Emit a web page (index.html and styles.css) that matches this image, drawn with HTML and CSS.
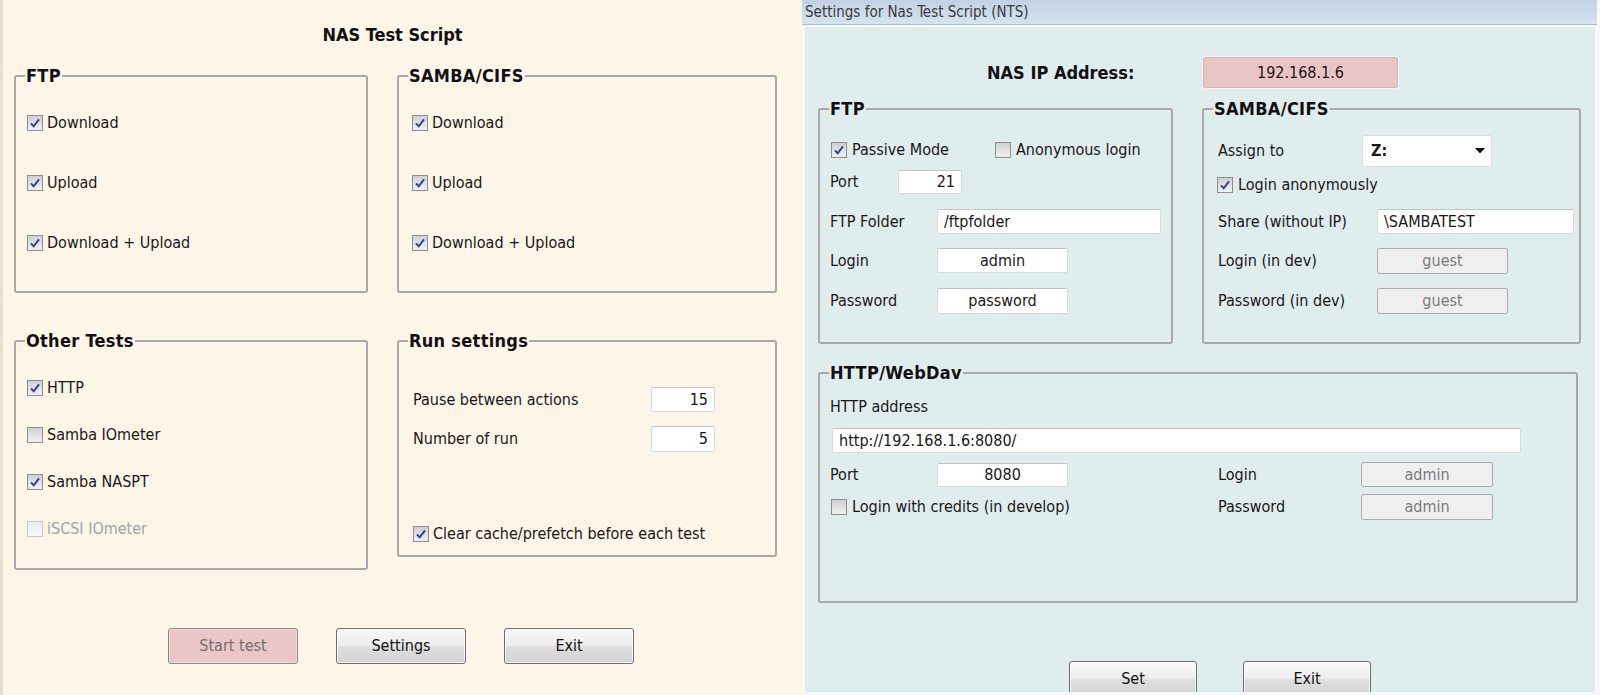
FILE: index.html
```html
<!DOCTYPE html>
<html lang="en">
<head>
<meta charset="utf-8">
<title>NAS Test Script</title>
<link rel="stylesheet" href="styles.css">
</head>
<body>
<div class="screen">
  <section class="main">
    <h1 class="title">NAS Test Script</h1>
    <div class="groups">
      <fieldset class="grp g-top">
        <legend>FTP</legend>
        <div class="list list-top pl11">
          <label class="chk"><span class="box"><svg class="tick" viewBox="0 0 14 14"><path d="M3 7.3 5.7 10.3 11 3.3"/></svg></span>Download</label>
          <label class="chk"><span class="box"><svg class="tick" viewBox="0 0 14 14"><path d="M3 7.3 5.7 10.3 11 3.3"/></svg></span>Upload</label>
          <label class="chk"><span class="box"><svg class="tick" viewBox="0 0 14 14"><path d="M3 7.3 5.7 10.3 11 3.3"/></svg></span>Download + Upload</label>
        </div>
      </fieldset>
      <fieldset class="grp g-top">
        <legend>SAMBA/CIFS</legend>
        <div class="list list-top pl13">
          <label class="chk"><span class="box"><svg class="tick" viewBox="0 0 14 14"><path d="M3 7.3 5.7 10.3 11 3.3"/></svg></span>Download</label>
          <label class="chk"><span class="box"><svg class="tick" viewBox="0 0 14 14"><path d="M3 7.3 5.7 10.3 11 3.3"/></svg></span>Upload</label>
          <label class="chk"><span class="box"><svg class="tick" viewBox="0 0 14 14"><path d="M3 7.3 5.7 10.3 11 3.3"/></svg></span>Download + Upload</label>
        </div>
      </fieldset>
      <fieldset class="grp g-other">
        <legend>Other Tests</legend>
        <div class="list list-other pl11">
          <label class="chk"><span class="box"><svg class="tick" viewBox="0 0 14 14"><path d="M3 7.3 5.7 10.3 11 3.3"/></svg></span>HTTP</label>
          <label class="chk"><span class="box"></span>Samba IOmeter</label>
          <label class="chk"><span class="box"><svg class="tick" viewBox="0 0 14 14"><path d="M3 7.3 5.7 10.3 11 3.3"/></svg></span>Samba NASPT</label>
          <label class="chk is-disabled"><span class="box"></span>iSCSI IOmeter</label>
        </div>
      </fieldset>
      <fieldset class="grp g-run">
        <legend>Run settings</legend>
        <div class="run">
          <div class="row"><span class="lbl lw-run">Pause between actions</span><span class="field f-num">15</span></div>
          <div class="row mt14"><span class="lbl lw-run">Number of run</span><span class="field f-num f-tall">5</span></div>
          <label class="chk mt70"><span class="box"><svg class="tick" viewBox="0 0 14 14"><path d="M3 7.3 5.7 10.3 11 3.3"/></svg></span>Clear cache/prefetch before each test</label>
        </div>
      </fieldset>
    </div>
    <div class="actions">
      <button class="btn btn-start" type="button">Start test</button>
      <button class="btn" type="button">Settings</button>
      <button class="btn" type="button">Exit</button>
    </div>
  </section>

  <section class="win">
    <div class="titlebar">Settings for Nas Test Script (NTS)</div>
    <div class="win-body">
      <div class="ip-row">
        <span class="ip-label">NAS IP Address:</span>
        <span class="ip-field">192.168.1.6</span>
      </div>
      <div class="sgroups">
        <fieldset class="grp s-ftp">
          <legend>FTP</legend>
          <div class="sbody ftp-body">
            <div class="row">
              <label class="chk c-passive"><span class="box"><svg class="tick" viewBox="0 0 14 14"><path d="M3 7.3 5.7 10.3 11 3.3"/></svg></span>Passive Mode</label>
              <label class="chk"><span class="box"></span>Anonymous login</label>
            </div>
            <div class="row mt8"><span class="lbl lw-port">Port</span><span class="field f-port">21</span></div>
            <div class="row mt15"><span class="lbl lw-ftp">FTP Folder</span><span class="field f-folder">/ftpfolder</span></div>
            <div class="row mt14"><span class="lbl lw-ftp">Login</span><span class="field f-mid">admin</span></div>
            <div class="row mt15"><span class="lbl lw-ftp">Password</span><span class="field f-mid f-tall">password</span></div>
          </div>
        </fieldset>
        <fieldset class="grp s-samba">
          <legend>SAMBA/CIFS</legend>
          <div class="sbody samba-body">
            <div class="row">
              <span class="lbl lw-assign">Assign to</span>
              <span class="select">Z:<svg class="caret" viewBox="0 0 10 6"><path d="M0 0H10L5 5.5Z"/></svg></span>
            </div>
            <div class="row mt6"><label class="chk c-anon"><span class="box"><svg class="tick" viewBox="0 0 14 14"><path d="M3 7.3 5.7 10.3 11 3.3"/></svg></span>Login anonymously</label></div>
            <div class="row mt12"><span class="lbl lw-share">Share (without IP)</span><span class="field f-share">\SAMBATEST</span></div>
            <div class="row mt14"><span class="lbl lw-share">Login (in dev)</span><span class="field is-off f-guest">guest</span></div>
            <div class="row mt14"><span class="lbl lw-share">Password (in dev)</span><span class="field is-off f-guest">guest</span></div>
          </div>
        </fieldset>
      </div>
      <fieldset class="grp s-http">
        <legend>HTTP/WebDav</legend>
        <div class="sbody http-body">
          <div class="row"><span class="lbl">HTTP address</span></div>
          <div class="row mt9"><span class="field f-url">http://192.168.1.6:8080/</span></div>
          <div class="cols mt9">
            <div class="row"><span class="lbl lw-ftp">Port</span><span class="field f-mid f-short">8080</span></div>
            <div class="row"><span class="lbl lw-http">Login</span><span class="field is-off f-cred">admin</span></div>
          </div>
          <div class="cols mt7">
            <div class="row"><label class="chk c-cred"><span class="box"></span>Login with credits (in develop)</label></div>
            <div class="row"><span class="lbl lw-http">Password</span><span class="field is-off f-cred f-tall">admin</span></div>
          </div>
        </div>
      </fieldset>
      <div class="win-actions">
        <button class="btn btn-win" type="button">Set</button>
        <button class="btn btn-win" type="button">Exit</button>
      </div>
    </div>
  </section>
</div>
</body>
</html>
```

FILE: styles.css
```css
* { box-sizing: border-box; }

html, body { margin: 0; }

body {
  font-family: "DejaVu Sans Condensed", "DejaVu Sans", sans-serif;
  font-stretch: semi-condensed;
  font-size: 16px;
  line-height: 24px;
  color: #1a1616;
  background: #ffffff;
}

.screen {
  display: flex;
  width: 1600px;
  height: 695px;
  overflow: hidden;
}

/* ---------- left: main window ---------- */
.main {
  flex: none;
  width: 802px;
  height: 695px;
  padding: 24px 0 0 14px;
  background: #fdf5e8;
  box-shadow: inset 3px 0 0 #e7dfd3;
}

.title {
  margin: 0;
  width: 763px;
  padding-right: 6px;
  font-size: 18px;
  line-height: 22px;
  font-weight: bold;
  text-align: center;
  color: #111;
}

.groups {
  display: grid;
  grid-template-columns: 354px 380px;
  column-gap: 29px;
  row-gap: 38px;
  align-items: start;
  margin-top: 20px;
}

.grp {
  margin: 0;
  padding: 0;
  min-width: 0;
  border: 2px solid #a9a9a9;
  border-radius: 3px;
}

.grp > legend {
  margin-left: 9px;
  padding: 0 1px;
  font-size: 18px;
  line-height: 20px;
  font-weight: bold;
  letter-spacing: 0.3px;
  color: #111;
}

.g-top { height: 227px; }
.g-other { height: 239px; }
.g-run { height: 226px; }

.list {
  display: flex;
  flex-direction: column;
  align-items: flex-start;
}

.list-top { padding-top: 25px; gap: 36px; }
.list-other { padding-top: 25px; gap: 23px; }
.pl11 { padding-left: 11px; }
.pl13 { padding-left: 13px; }

.run {
  display: flex;
  flex-direction: column;
  align-items: flex-start;
  padding: 36px 0 0 14px;
}

/* ---------- shared controls ---------- */
.row {
  display: flex;
  align-items: center;
  white-space: nowrap;
}

.lbl { flex: none; }

.chk {
  display: flex;
  align-items: center;
  height: 24px;
  white-space: nowrap;
}

.box {
  flex: none;
  display: flex;
  align-items: center;
  justify-content: center;
  width: 16px;
  height: 16px;
  margin-right: 4px;
  border: 1px solid #8e8e8e;
  background: linear-gradient(#d0d0d0, #f1f1f1);
}

.tick { width: 14px; height: 14px; }

.tick path {
  fill: none;
  stroke: #2a42a0;
  stroke-width: 2;
}

.is-disabled { color: #a3a3a3; }

.is-disabled .box {
  border-color: #c9c9c9;
  background: linear-gradient(#ececec, #f8f8f8);
}

.field {
  flex: none;
  display: flex;
  align-items: center;
  justify-content: center;
  height: 25px;
  padding: 0 6px;
  background: #ffffff;
  border: 1px solid #d6dcdc;
  border-top-color: #bfc4c4;
  border-radius: 2px;
  color: #1a1616;
  white-space: nowrap;
}

.field.is-off {
  background: #efefef;
  border: 1px solid #aeaeae;
  color: #7c7c7c;
}

.f-tall { height: 26px; }

.f-num { width: 64px; justify-content: flex-end; }
.lw-run { width: 238px; }

.mt6 { margin-top: 6px; }
.mt7 { margin-top: 7px; }
.mt8 { margin-top: 8px; }
.mt9 { margin-top: 9px; }
.mt12 { margin-top: 12px; }
.mt14 { margin-top: 14px; }
.mt15 { margin-top: 15px; }
.mt70 { margin-top: 70px; }

.actions {
  display: flex;
  justify-content: center;
  gap: 38px;
  margin: 58px 0 0 -14px;
}

.btn {
  font: inherit;
  width: 130px;
  height: 36px;
  padding: 0;
  border: 1px solid #6e6e6e;
  border-radius: 3px;
  color: #111;
  background: linear-gradient(#f8f8f8 0%, #ededed 47%, #dedede 53%, #d3d3d3 100%);
  box-shadow: inset 0 0 0 1px rgba(255, 255, 255, 0.75);
}

.btn-start {
  color: #707070;
  border-color: #8a8a8a;
  background: #eac6c6;
  box-shadow: inset 0 0 0 1px rgba(255, 255, 255, 0.35);
}

/* ---------- right: settings window ---------- */
.win {
  flex: 1;
  display: flex;
  flex-direction: column;
  background: #f6f9fc;
}

.titlebar {
  flex: none;
  height: 25px;
  margin-right: 3px;
  padding-left: 3px;
  font-size: 15px;
  line-height: 24px;
  color: #3a3a3a;
  background: linear-gradient(#c2d2e3, #d6e3ef);
  border-bottom: 1px solid #aebdcd;
}

.win-body {
  flex: 1;
  margin: 2px 5px 3px 3px;
  padding: 30px 0 0 13px;
  background: #e0eded;
  overflow: hidden;
}

.ip-row {
  display: flex;
  align-items: center;
  height: 31px;
  padding-left: 169px;
}

.ip-label {
  width: 216px;
  font-size: 18px;
  font-weight: bold;
  color: #111;
}

.ip-field {
  display: flex;
  align-items: center;
  justify-content: center;
  width: 195px;
  height: 31px;
  background: #eac5c5;
  border: 1px solid #d8b4b4;
  box-shadow: 0 0 0 1px #f1f4f4;
  border-radius: 2px;
}

.sgroups {
  display: flex;
  gap: 29px;
  margin-top: 11px;
}

.s-ftp { width: 355px; height: 245px; }
.s-samba { width: 379px; height: 245px; }
.s-http { width: 760px; height: 240px; margin-top: 19px; }

.sbody {
  display: flex;
  flex-direction: column;
  align-items: flex-start;
}

.ftp-body { padding: 19px 0 0 10px; }
.samba-body { padding: 16px 0 0 14px; }
.http-body { padding: 12px 0 0 10px; }

.c-passive { width: 165px; }
.c-passive .box, .c-cred .box { margin-left: 1px; margin-right: 5px; }
.c-anon .box { margin-left: -1px; margin-right: 5px; }
.ftp-body .chk .box { margin-right: 5px; }

.lw-port { width: 68px; }
.lw-ftp { width: 107px; }
.lw-assign { width: 144px; }
.lw-share { width: 159px; }
.lw-http { width: 143px; }

.f-port { width: 64px; height: 24px; justify-content: flex-end; }
.f-folder { width: 224px; justify-content: flex-start; }
.f-mid { width: 131px; }
.f-short { height: 24px; }
.f-share { width: 197px; justify-content: flex-start; }
.f-guest { width: 131px; height: 26px; }
.f-cred { width: 132px; }
.f-url { width: 689px; margin-left: 2px; justify-content: flex-start; }

.select {
  display: flex;
  align-items: center;
  justify-content: space-between;
  width: 130px;
  height: 32px;
  padding: 0 6px 0 8px;
  background: #ffffff;
  border: 1px solid #d9dede;
  border-radius: 2px;
  font-weight: bold;
}

.caret { width: 10px; height: 6px; }
.caret path { fill: #111; }

.cols {
  display: grid;
  grid-template-columns: 388px auto;
  align-items: center;
}

.win-actions {
  display: flex;
  gap: 46px;
  margin-top: 58px;
  padding-left: 251px;
}

.btn-win { width: 128px; }
```
